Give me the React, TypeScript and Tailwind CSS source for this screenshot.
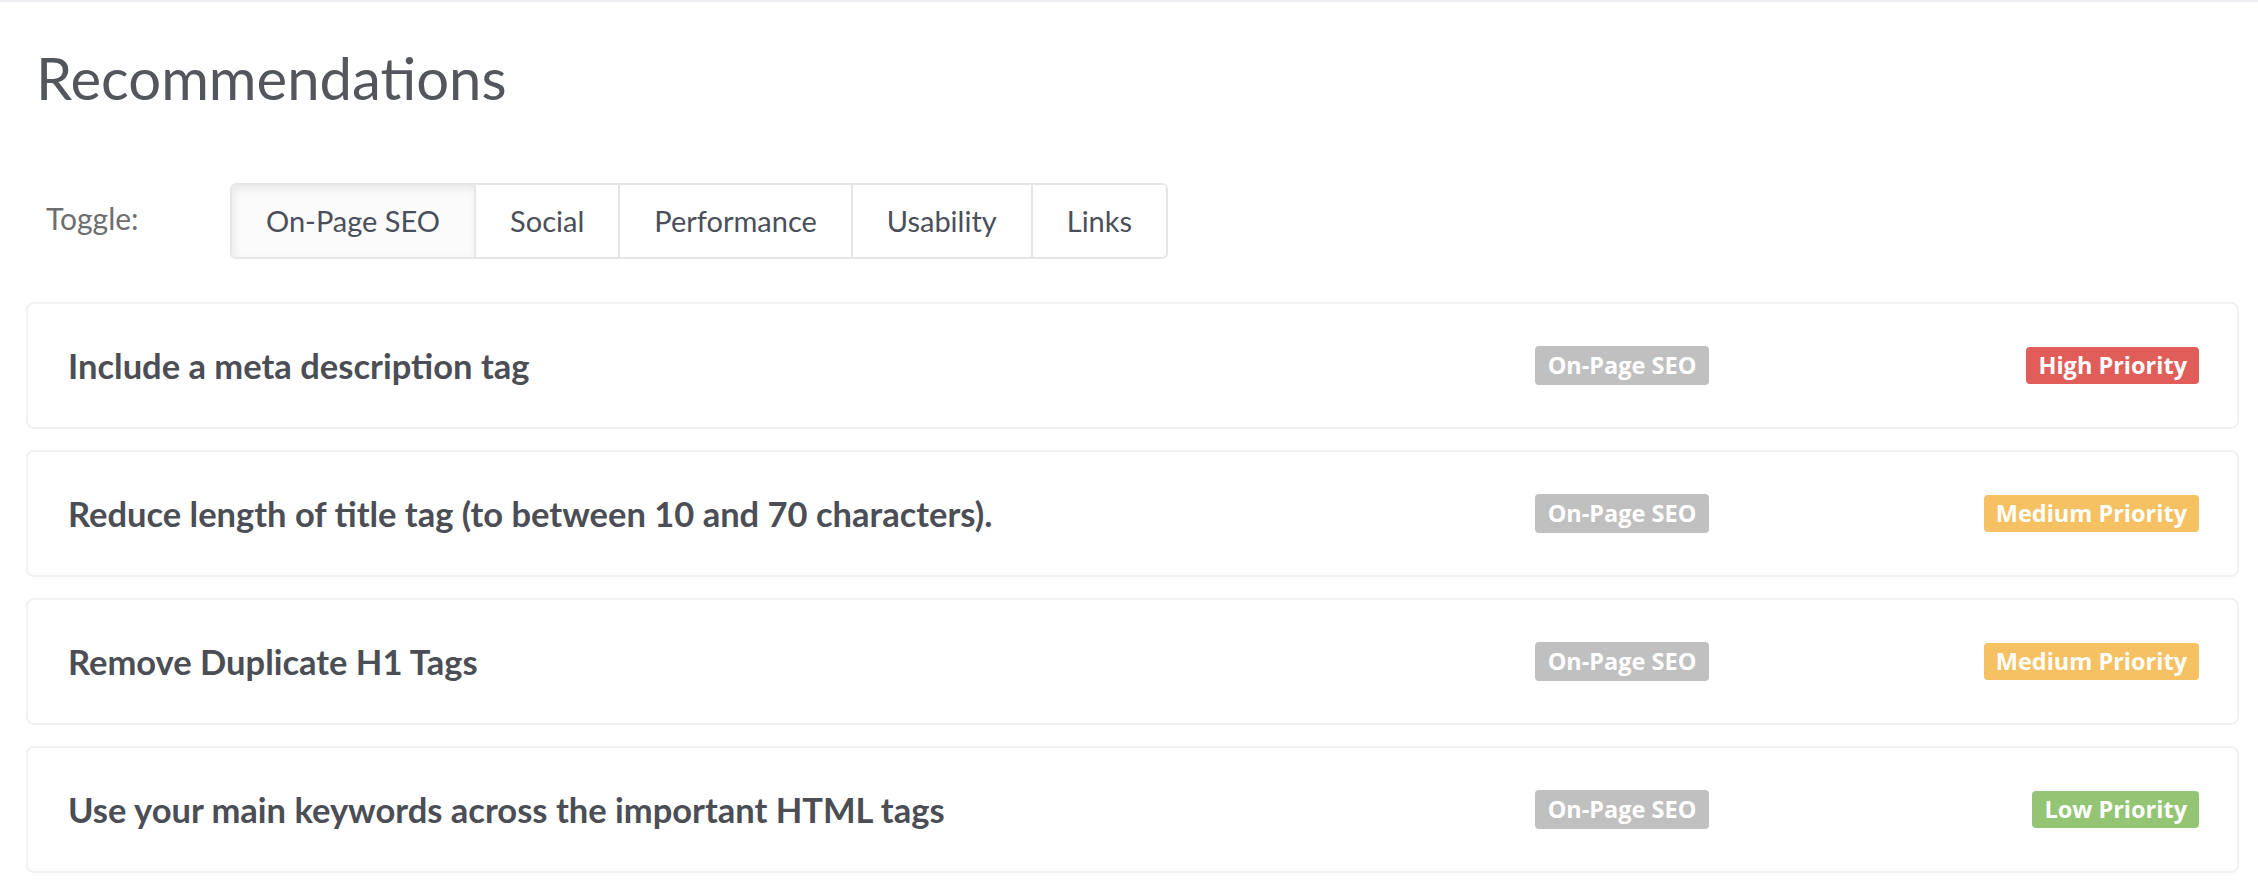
import { useState } from "react";

type Priority = "High" | "Medium" | "Low";

const TABS = ["On-Page SEO", "Social", "Performance", "Usability", "Links"];

const ITEMS: { title: string; category: string; priority: Priority }[] = [
  { title: "Include a meta description tag", category: "On-Page SEO", priority: "High" },
  {
    title: "Reduce length of title tag (to between 10 and 70 characters).",
    category: "On-Page SEO",
    priority: "Medium",
  },
  { title: "Remove Duplicate H1 Tags", category: "On-Page SEO", priority: "Medium" },
  {
    title: "Use your main keywords across the important HTML tags",
    category: "On-Page SEO",
    priority: "Low",
  },
];

const PRIORITY_BG: Record<Priority, string> = {
  High: "bg-[#e05d5a]",
  Medium: "bg-[#f5c163]",
  Low: "bg-[#93c575]",
};

export default function App() {
  const [active, setActive] = useState("On-Page SEO");

  return (
    <div className="min-h-screen bg-white border-t-2 border-[#eceef1] font-['Lato',sans-serif]">
      <div className="pl-[26px] pr-[19px]">
        {/* Header */}
        <h1 className="pl-[10px] pt-[38px] text-[58px] leading-[76px] font-normal text-[#53565c]">
          Recommendations
        </h1>

        {/* Toggle */}
        <div className="mt-[67px] flex items-start">
          <span className="w-[204px] pl-[20px] pt-[13px] text-[30px] text-[#6e6e6e]">Toggle:</span>
          <div className="flex h-[76px] rounded-[6px] border-2 border-[#e6e6e6] overflow-hidden">
            {TABS.map((t, i) => (
              <button
                key={t}
                onClick={() => setActive(t)}
                className={
                  "px-[34px] text-[29px] text-[#4a4f5a] " +
                  (i > 0 ? "border-l-2 border-[#e6e6e6] " : "") +
                  (active === t ? "bg-[#fbfbfb] shadow-[inset_2px_4px_8px_rgba(0,0,0,0.08)]" : "bg-white")
                }
              >
                {t}
              </button>
            ))}
          </div>
        </div>

        {/* Items */}
        <div className="mt-[43px] flex flex-col gap-[21px]">
          {ITEMS.map((it) => (
            <div
              key={it.title}
              className="flex h-[127px] items-center rounded-[8px] border-2 border-[#f1f1f1] bg-white pl-[40px] pr-[38px]"
            >
              <div className="flex-1 text-[34.5px] font-bold text-[#4b4e55]">{it.title}</div>
              <span className="flex h-[39px] w-[174px] items-center justify-center rounded-[4px] bg-[#c0c0c0] font-['Open_Sans',sans-serif] text-[23.5px] font-bold text-white">
                {it.category}
              </span>
              <div className="flex w-[490px] justify-end">
                <span
                  className={
                    "flex h-[37px] items-center rounded-[4px] px-[12px] font-['Open_Sans',sans-serif] text-[23.5px] font-bold text-white " +
                    PRIORITY_BG[it.priority]
                  }
                >
                  {it.priority} Priority
                </span>
              </div>
            </div>
          ))}
        </div>
      </div>
    </div>
  );
}
